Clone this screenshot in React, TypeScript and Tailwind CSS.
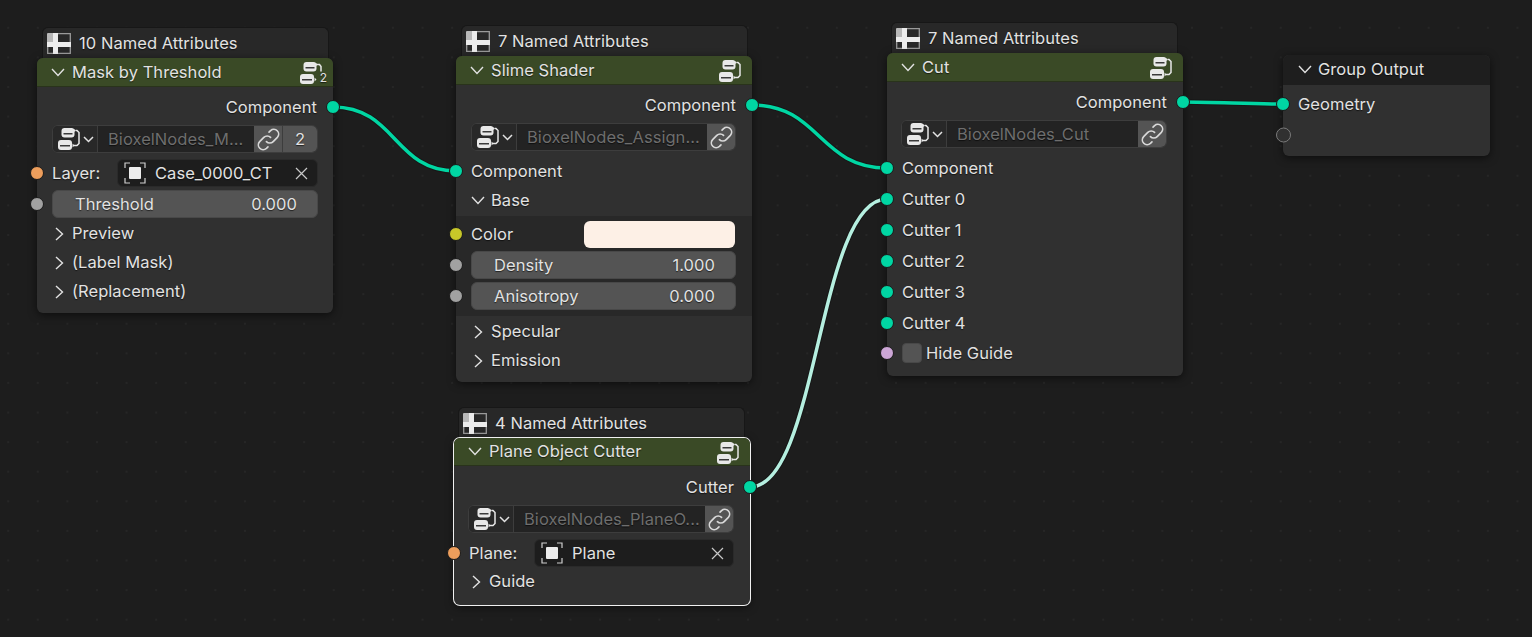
import type { ReactNode } from "react";

const TEAL = "bg-[#00d6a3]";
const ORANGE = "bg-[#ed9e5c]";
const GREY = "bg-[#a1a1a1]";
const YELLOW = "bg-[#c7c729]";
const PINK = "bg-[#cca6d6]";

function Socket({ color, side = "left" }: { color: string; side?: "left" | "right" }) {
  return (
    <span
      className={`absolute top-1/2 h-[14px] w-[14px] -translate-y-1/2 rounded-full border border-[#1a1a1a] ${color} ${
        side === "left" ? "-left-[7px]" : "-right-[7px]"
      }`}
    />
  );
}

function ChevronOpen() {
  return (
    <svg width="14" height="9" viewBox="0 0 14 9" fill="none" stroke="#e2e2e2" strokeWidth="1.400" className="shrink-0">
      <path d="M1 1l6 6.500L13 1" />
    </svg>
  );
}

function ChevronClosed() {
  return (
    <svg width="9" height="14" viewBox="0 0 9 14" fill="none" stroke="#e2e2e2" strokeWidth="1.400" className="shrink-0">
      <path d="M1 1l6.500 6L1 13" />
    </svg>
  );
}

function CloseIcon() {
  return (
    <svg width="13" height="13" viewBox="0 0 13 13" fill="none" stroke="#c8c8c8" strokeWidth="1.200" className="shrink-0">
      <path d="M1 1l11 11M12 1L1 12" />
    </svg>
  );
}

function AttributeIcon() {
  return (
    <svg width="24" height="21" viewBox="0 0 24 21" className="shrink-0">
      <path d="M11 .7h12.300V20.300H11M.7 14v6.300H8" fill="none" stroke="#9a9a9a" strokeWidth="1.300" />
      <rect x="0" y="0" width="8" height="10" rx="1" fill="#b8b8b8" />
      <rect x="0" y="9" width="24" height="5" fill="#ececec" />
      <rect x="6" y="0" width="5" height="21" fill="#ececec" />
    </svg>
  );
}

function GroupIcon({ badge }: { badge?: boolean }) {
  return (
    <svg width="22" height="22" viewBox="0 0 22 22" className="shrink-0">
      <rect x="3.500" y="0" width="13" height="9.500" rx="3" fill="#e8e8e8" />
      <rect x="5.500" y="5" width="9" height="1.500" fill="#3a3a3a" />
      <rect x="0" y="12" width="14" height="10" rx="3" fill="#e8e8e8" />
      <rect x="2" y="17" width="10" height="1.500" fill="#3a3a3a" />
      {badge ? (
        <path d="M17 2.500h2.500l1.500 2v5" fill="none" stroke="#e8e8e8" strokeWidth="1.500" />
      ) : (
        <path d="M17.500 2.500h1.500l2 2v11l-2 2h-3.500" fill="none" stroke="#e8e8e8" strokeWidth="1.500" />
      )}
      <path d="M16 1l1.800 1.500L16 4zM14.500 15.500l2 2-2 2z" fill="#e8e8e8" />
    </svg>
  );
}

function LinkIcon() {
  return (
    <svg width="25" height="25" viewBox="0 0 24 24" fill="none" stroke="#d8d8d8" strokeWidth="1.600" strokeLinecap="round" className="shrink-0">
      <path d="M10 14a4.500 4.500 0 0 0 6.500 0l4-4a4.600 4.600 0 0 0-6.500-6.500l-1.500 1.500" />
      <path d="M14 10a4.500 4.500 0 0 0-6.500 0l-4 4a4.600 4.600 0 0 0 6.500 6.500l1.500-1.500" />
    </svg>
  );
}

function ObjectIcon() {
  return (
    <svg width="22" height="22" viewBox="0 0 22 22" className="shrink-0">
      <path d="M1 6V1h5M16 1h5v5M21 16v5h-5M6 21H1v-5" fill="none" stroke="#cfcfcf" strokeWidth="1.200" />
      <rect x="5" y="5" width="12" height="12" rx="1" fill="#ececec" />
    </svg>
  );
}

function NodeBox({
  position,
  tab,
  title,
  badge,
  selected,
  tabOffset = "ml-[5px]",
  children,
}: {
  position: string;
  tab: string;
  title: string;
  badge?: string;
  selected?: boolean;
  tabOffset?: string;
  children: ReactNode;
}) {
  return (
    <section className={`absolute flex w-[296px] flex-col ${position}`}>
      <div
        className={`flex h-[31px] w-[287px] items-center gap-[8px] rounded-t-md border border-b-0 border-[#171717] bg-[#282828] pl-[4px] text-[#e2e2e2] ${tabOffset}`}
      >
        <AttributeIcon />
        <span>{tab}</span>
      </div>
      <div
        className={`flex flex-col rounded-md bg-[#303030] shadow-[0_2px_8px_rgba(0,0,0,0.55)] ${
          selected ? "ring-1 ring-[#f0f0f0]" : ""
        }`}
      >
        <header
          className={`relative flex items-center rounded-t-md border-b border-[#29331b] bg-[#3a4a26] pl-[14px] text-[#e2e2e2] ${
            selected ? "h-[28px]" : "h-[29px]"
          }`}
        >
          <span className="mr-[7px]">
            <ChevronOpen />
          </span>
          <span>{title}</span>
          <span className="absolute right-[11px] top-[4px]">
            <GroupIcon badge={Boolean(badge)} />
          </span>
          {badge ? <span className="absolute right-[6px] bottom-[2px] text-[12px] leading-[12px]">{badge}</span> : null}
        </header>
        {children}
      </div>
    </section>
  );
}

function OutputRow({ label, className }: { label: string; className: string }) {
  return (
    <div className={`relative flex h-7 items-center justify-end pr-[16px] text-[#e2e2e2] ${className}`}>
      <span>{label}</span>
      <Socket color={TEAL} side="right" />
    </div>
  );
}

function InputRow({ label, color, className = "" }: { label: string; color: string; className?: string }) {
  return (
    <div className={`relative flex h-7 items-center pl-[15px] text-[#e2e2e2] ${className}`}>
      <span>{label}</span>
      <Socket color={color} />
    </div>
  );
}

function GroupField({ name, count, className }: { name: string; count?: string; className: string }) {
  return (
    <div className={`flex h-7 items-stretch overflow-hidden rounded-md border border-[#3d3d3d] bg-[#232323] ${className}`}>
      <div className="flex w-[45px] shrink-0 items-center border-r border-[#3d3d3d] bg-[#282828] pl-[5px]">
        <GroupIcon />
        <svg width="11" height="7" viewBox="0 0 11 7" fill="none" stroke="#e2e2e2" strokeWidth="1.500" className="ml-[3px] shrink-0">
          <path d="M1 1l4.500 4.500L10 1" />
        </svg>
      </div>
      <div className="min-w-0 flex-1 pl-[10px] leading-[26px] whitespace-nowrap text-[#6e6e6e]">{name}</div>
      <div className="flex w-[28px] shrink-0 items-center justify-center bg-[#545454]">
        <LinkIcon />
      </div>
      {count ? (
        <div className="flex w-[35px] shrink-0 items-center justify-center border-l border-[#3d3d3d] bg-[#545454] text-[#e2e2e2]">
          {count}
        </div>
      ) : null}
    </div>
  );
}

function ObjectField({ label, value, width, className }: { label: string; value: string; width: string; className: string }) {
  return (
    <div className={`relative flex h-7 items-center pl-[15px] text-[#e2e2e2] ${className}`}>
      <span>{label}</span>
      <Socket color={ORANGE} />
      <div className={`ml-auto flex h-7 items-center rounded-md border border-[#2a2a2a] bg-[#1d1d1d] pl-[6px] pr-[9px] ${width}`}>
        <ObjectIcon />
        <span className="ml-[9px] flex-1">{value}</span>
        <CloseIcon />
      </div>
    </div>
  );
}

function Slider({ label, value, className }: { label: string; value: string; className: string }) {
  return (
    <div className={`relative h-7 pl-[15px] text-[#e2e2e2] ${className}`}>
      <Socket color={GREY} />
      <div className="flex h-7 items-center justify-between rounded-md border border-[#484848] bg-[#545454] pl-[22px] pr-[20px]">
        <span>{label}</span>
        <span>{value}</span>
      </div>
    </div>
  );
}

function PanelRow({ label, open, className = "" }: { label: string; open?: boolean; className?: string }) {
  return (
    <div className={`flex h-[29px] items-center text-[#e2e2e2] ${className}`}>
      <span className={`flex w-[35px] shrink-0 ${open ? "pl-[15px]" : "pl-[18px]"}`}>{open ? <ChevronOpen /> : <ChevronClosed />}</span>
      <span>{label}</span>
    </div>
  );
}

function Wires() {
  return (
    <svg width="1532" height="637" viewBox="0 0 1532 637" fill="none" className="absolute left-0 top-0">
      <g stroke="#171717" strokeWidth="5.500">
        <path d="M333 107C396 107 394 171 456 171" />
        <path d="M752 105C820 105 819 168 887 168" />
        <path d="M1182 102C1215 102 1250 104 1283 104" />
        <path d="M750 487C818 487 818 199 887 199" />
      </g>
      <path d="M333 107C396 107 394 171 456 171" stroke="#00d6a3" strokeWidth="3.500" />
      <path d="M752 105C820 105 819 168 887 168" stroke="#00d6a3" strokeWidth="3.500" />
      <path d="M1182 102C1215 102 1250 104 1283 104" stroke="#00d6a3" strokeWidth="3.500" />
      <path d="M750 487C818 487 818 199 887 199" stroke="#b5efe0" strokeWidth="3.500" />
    </svg>
  );
}

export default function App() {
  return (
    <main className="relative h-[637px] w-[1532px] overflow-hidden bg-[#1d1d1d] bg-[radial-gradient(#262626_1px,transparent_1px)] bg-[size:29.6px_29.6px] bg-[position:23px_13px] font-['Inter',sans-serif] text-[16.5px] leading-none tracking-[0.05px] [text-shadow:0_1px_1px_rgba(0,0,0,0.6)]">
      <Wires />

      <NodeBox position="left-[37px] top-[27px]" tab="10 Named Attributes" title="Mask by Threshold" badge="2">
        <OutputRow label="Component" className="mt-[6px]" />
        <GroupField name="BioxelNodes_M..." count="2" className="mx-[15px] mt-[4px]" />
        <ObjectField label="Layer:" value="Case_0000_CT" width="w-[201px]" className="mt-[6px] pr-[15px]" />
        <Slider label="Threshold" value="0.000" className="mt-[3px] pr-[15px]" />
        <div className="pt-px pb-[7px]">
          <PanelRow label="Preview" />
          <PanelRow label="(Label Mask)" />
          <PanelRow label="(Replacement)" />
        </div>
      </NodeBox>

      <NodeBox position="left-[456px] top-[25px]" tab="7 Named Attributes" title="Slime Shader">
        <OutputRow label="Component" className="mt-[6px]" />
        <GroupField name="BioxelNodes_Assign..." className="ml-[15px] mr-[16px] mt-[4px]" />
        <InputRow label="Component" color={TEAL} className="mt-[6px]" />
        <PanelRow label="Base" open className="mt-px mb-px" />
        <div className="flex flex-col bg-[#282828] pt-[4px] pb-[6px]">
          <div className="relative flex h-7 items-center pl-[15px] pr-[17px] text-[#e2e2e2]">
            <span>Color</span>
            <Socket color={YELLOW} />
            <div className="ml-auto h-[27px] w-[151px] rounded-md bg-[#fdf0e6]" />
          </div>
          <Slider label="Density" value="1.000" className="mt-[3px] pr-[16px]" />
          <Slider label="Anisotropy" value="0.000" className="mt-[3px] pr-[16px]" />
        </div>
        <div className="pt-px pb-[7px]">
          <PanelRow label="Specular" />
          <PanelRow label="Emission" />
        </div>
      </NodeBox>

      <NodeBox position="left-[454px] top-[407px]" tab="4 Named Attributes" title="Plane Object Cutter" tabOffset="ml-[4px]" selected>
        <OutputRow label="Cutter" className="mt-[7px]" />
        <GroupField name="BioxelNodes_PlaneO..." className="ml-[14px] mr-[16px] mt-[4px]" />
        <ObjectField label="Plane:" value="Plane" width="w-[200px]" className="mt-[6px] pr-[16px]" />
        <div className="pb-[9px]">
          <PanelRow label="Guide" />
        </div>
      </NodeBox>

      <NodeBox position="left-[887px] top-[22px]" tab="7 Named Attributes" title="Cut" tabOffset="ml-[4px]">
        <OutputRow label="Component" className="mt-[6px]" />
        <GroupField name="BioxelNodes_Cut" className="ml-[14px] mr-[16px] mt-[4px]" />
        <InputRow label="Component" color={TEAL} className="mt-[6px]" />
        <InputRow label="Cutter 0" color={TEAL} className="mt-[3px]" />
        <InputRow label="Cutter 1" color={TEAL} className="mt-[3px]" />
        <InputRow label="Cutter 2" color={TEAL} className="mt-[3px]" />
        <InputRow label="Cutter 3" color={TEAL} className="mt-[3px]" />
        <InputRow label="Cutter 4" color={TEAL} className="mt-[3px]" />
        <div className="relative mt-[2px] mb-[9px] flex h-7 items-center gap-[4px] pl-[15px] text-[#e2e2e2]">
          <Socket color={PINK} />
          <span className="h-[20px] w-[20px] rounded-[4px] border border-[#484848] bg-[#545454]" />
          <span>Hide Guide</span>
        </div>
      </NodeBox>

      <section className="absolute left-[1283px] top-[55px] flex h-[101px] w-[207px] flex-col rounded-md bg-[#303030] text-[#e2e2e2] shadow-[0_2px_8px_rgba(0,0,0,0.55)]">
        <header className="flex h-[30px] shrink-0 items-center rounded-t-md bg-[#1e1e1e] pb-[2px] pl-[15px]">
          <span className="mr-[6px]">
            <ChevronOpen />
          </span>
          <span>Group Output</span>
        </header>
        <div className="relative mt-[5px] flex h-7 items-center pl-[15px]">
          <span>Geometry</span>
          <Socket color={TEAL} />
        </div>
        <div className="relative mt-[3px] h-7">
          <span className="absolute -left-[7px] top-1/2 h-[15px] w-[15px] -translate-y-1/2 rounded-full border-[1.5px] border-[#7a7a7a] bg-[#303030]" />
        </div>
      </section>
    </main>
  );
}
